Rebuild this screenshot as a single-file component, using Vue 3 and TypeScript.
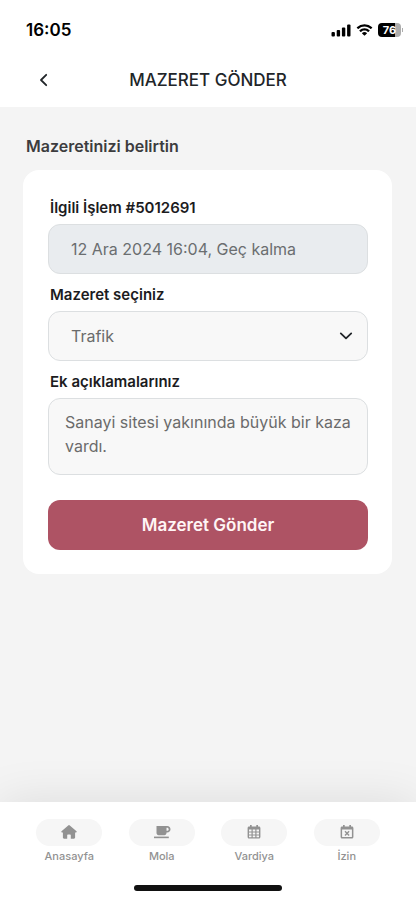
<script setup lang="ts">
import { ref } from 'vue'

type IconName = 'home' | 'cup' | 'calendar' | 'leave'

interface Tab {
  label: string
  icon: IconName
}

const tabs: Tab[] = [
  { label: 'Anasayfa', icon: 'home' },
  { label: 'Mola', icon: 'cup' },
  { label: 'Vardiya', icon: 'calendar' },
  { label: 'İzin', icon: 'leave' },
]

const operation = '12 Ara 2024 16:04, Geç kalma'
const reasons: string[] = ['Trafik']
const reason = ref<string>('Trafik')
const note = ref<string>('Sanayi sitesi yakınında büyük bir kaza vardı.')
</script>

<template>
  <div class="screen">
    <header class="top">
      <div class="status">
        <span class="clock">16:05</span>
        <div class="indicators">
          <svg class="signal" viewBox="0 0 20 13" aria-hidden="true">
            <rect x="0.500" y="8" width="3.400" height="4.400" rx="1" />
            <rect x="5.700" y="6" width="3.400" height="6.400" rx="1" />
            <rect x="10.900" y="3.400" width="3.400" height="9" rx="1" />
            <rect x="16.100" y="0.400" width="3.400" height="12" rx="1" />
          </svg>
          <svg class="wifi" viewBox="0 0 17 13" aria-hidden="true">
            <path d="M8.5 2.6c2.4 0 4.5.9 6.1 2.4.1.1.3.1.4 0l1.2-1.2c.1-.1.1-.3 0-.5A11.2 11.2 0 0 0 .8 3.3c-.1.2-.1.4 0 .5L2 5c.1.1.3.1.4 0A8.9 8.9 0 0 1 8.5 2.6Z" />
            <path d="M8.5 6.6c1.3 0 2.5.5 3.4 1.3.1.1.3.1.5 0l1.2-1.2c.1-.1.1-.3 0-.5a7.4 7.4 0 0 0-10.2 0c-.1.2-.1.4 0 .5l1.2 1.2c.2.1.4.1.5 0 .9-.8 2.1-1.3 3.4-1.3Z" />
            <path d="M10.9 9.4c.1-.1.1-.3 0-.5a3.7 3.7 0 0 0-4.8 0c-.1.2-.1.4 0 .5l2.100 2.200c.2.1.4.1.6 0Z" />
          </svg>
          <div class="battery">
            <span class="battery-body">76</span>
            <span class="battery-tip"></span>
          </div>
        </div>
      </div>
      <div class="titlebar">
        <button class="back" type="button" aria-label="Geri">
          <svg viewBox="0 0 12 16" aria-hidden="true"><path d="M9.200 2.800 4 8l5.200 5.200" /></svg>
        </button>
        <h1>MAZERET GÖNDER</h1>
      </div>
    </header>

    <main>
      <h2>Mazeretinizi belirtin</h2>
      <form class="card" @submit.prevent>
        <div class="group">
          <label for="operation">İlgili İşlem #5012691</label>
          <input id="operation" class="field" type="text" :value="operation" disabled />
        </div>
        <div class="group">
          <label for="reason">Mazeret seçiniz</label>
          <div class="picker">
            <select id="reason" v-model="reason" class="field">
              <option v-for="item in reasons" :key="item">{{ item }}</option>
            </select>
            <svg class="chevron" viewBox="0 0 14 10" aria-hidden="true"><path d="m1.800 2.400 5.200 5 5.200-5" /></svg>
          </div>
        </div>
        <div class="group">
          <label for="note">Ek açıklamalarınız</label>
          <textarea id="note" v-model="note" class="field" rows="2"></textarea>
        </div>
        <button class="submit" type="submit">Mazeret Gönder</button>
      </form>
    </main>

    <nav>
      <div class="tabs">
        <a v-for="tab in tabs" :key="tab.label" class="tab" href="#">
          <span class="pill">
            <svg v-if="tab.icon === 'home'" viewBox="0 1 16 16" aria-hidden="true">
              <path d="M7.2 1.4a1.2 1.2 0 0 1 1.6 0L15.5 7.3c.5.5.2 1.2-.5 1.2h-.9v5.100c0 .7-.5 1.200-1.200 1.200H9.8v-3.600c0-.4-.3-.7-.7-.7H6.9c-.4 0-.7.3-.7.7v3.600H3.1c-.7 0-1.2-.5-1.2-1.200V8.5H1C.3 8.5 0 7.8.5 7.3Z" />
            </svg>
            <svg v-else-if="tab.icon === 'cup'" class="wide" viewBox="0 1 18 16" aria-hidden="true">
              <path fill-rule="evenodd" d="M3.5 2h10.700c2 0 3.300 1.400 3.300 3.200s-1.400 3.300-3.300 3.300h-.7v.6c0 1.200-.9 2.100-2.100 2.100H5.6c-1.200 0-2.100-.9-2.100-2.100Zm10 1.700v3.100h.6c.9 0 1.600-.7 1.600-1.600s-.7-1.500-1.600-1.500Z" />
              <path d="M1 12.6h14.800v1.600H1z" />
            </svg>
            <svg v-else-if="tab.icon === 'calendar'" viewBox="0 1 16 16" aria-hidden="true">
              <path fill-rule="evenodd" d="M4 1h1.700v1.600h4.600V1H12v1.600h.9c.9 0 1.500.6 1.500 1.500v9c0 .9-.6 1.500-1.500 1.500H3.100c-.9 0-1.500-.6-1.500-1.500v-9c0-.9.6-1.500 1.500-1.500H4ZM3 5.600v1.900h2.500V5.600Zm3.700 0v1.900h2.600V5.600Zm3.800 0v1.900H13V5.600ZM3 8.600v1.800h2.500V8.600Zm3.700 0v1.800h2.600V8.600Zm3.800 0v1.800H13V8.600ZM3 11.500v1.800h2.500v-1.800Zm3.700 0v1.800h2.600v-1.800Zm3.800 0v1.800H13v-1.800Z" />
            </svg>
            <svg v-else viewBox="0 1 16 16" aria-hidden="true">
              <path fill-rule="evenodd" d="M4 1h1.700v1.600h4.600V1H12v1.600h.9c.9 0 1.500.6 1.500 1.500v9c0 .9-.6 1.500-1.500 1.500H3.100c-.9 0-1.500-.6-1.500-1.500v-9c0-.9.6-1.500 1.500-1.500H4ZM3.100 5.600v7.500h9.800V5.600Z" />
              <path class="cross" d="m6 7.300 4.100 4.100m0-4.100L6 11.400" />
            </svg>
          </span>
          <span class="tab-label">{{ tab.label }}</span>
        </a>
      </div>
      <div class="home-indicator"></div>
    </nav>
  </div>
</template>

<style>
body {
  background: #f4f4f4;
}
</style>

<style scoped>
.screen,
.screen * {
  box-sizing: border-box;
}

.screen {
  display: flex;
  flex-direction: column;
  min-height: 100vh;
  background: #f4f4f4;
  color: #212529;
  font-family: Inter, 'Liberation Sans', sans-serif;
}

.top {
  background: #fff;
}

.status {
  display: flex;
  align-items: center;
  justify-content: space-between;
  height: 60px;
  padding: 0 13px 0 26px;
  color: #000;
}

.clock {
  font-size: 17px;
  font-weight: 600;
}

.indicators {
  display: flex;
  align-items: center;
  gap: 5px;
}

.signal {
  width: 20px;
  height: 13px;
}

.wifi {
  width: 17px;
  height: 13px;
}

.battery {
  display: flex;
  align-items: center;
  gap: 1px;
}

.battery-body {
  width: 23px;
  height: 14px;
  border-radius: 4px;
  background: linear-gradient(90deg, #000 76%, #adadad 76%);
  color: #fff;
  font-size: 11px;
  font-weight: 700;
  line-height: 14px;
  text-align: center;
}

.battery-tip {
  width: 1px;
  height: 4px;
  background: #adadad;
}

.titlebar {
  display: grid;
  grid-template-columns: 36px 1fr 36px;
  align-items: center;
  height: 47px;
  padding: 0 25px 7px;
}

.back {
  display: grid;
  place-items: center;
  height: 36px;
  padding: 0;
  border: 0;
  background: none;
}

.back svg {
  width: 12px;
  height: 16px;
}

.back path,
.chevron path {
  fill: none;
  stroke: #212529;
  stroke-width: 1.8;
  stroke-linecap: round;
  stroke-linejoin: round;
}

h1 {
  margin: 0;
  font-size: 17px;
  font-weight: 500;
  line-height: 24px;
  text-align: center;
}

main {
  flex: 1;
  padding: 27px 24px 24px 23px;
}

h2 {
  margin: 0 3px 12px;
  color: #3c3c3e;
  font-size: 16px;
  font-weight: 600;
  line-height: 24px;
}

.card {
  display: flex;
  flex-direction: column;
  gap: 10px;
  padding: 27px 24px 24px 25px;
  border-radius: 16px;
  background: #fff;
}

.group {
  display: flex;
  flex-direction: column;
  gap: 5px;
}

label {
  padding: 0 2px;
  color: #1c1c1e;
  font-size: 15px;
  font-weight: 600;
  line-height: 22px;
}

.field {
  display: block;
  width: 100%;
  height: 50px;
  margin: 0;
  padding: 0 22px;
  border: 1px solid #dcdfe1;
  border-radius: 12px;
  background: #f8f8f8;
  color: #6b6b6b;
  font-family: inherit;
  font-size: 16px;
  line-height: 24px;
  appearance: none;
}

.field:disabled {
  background: #e9ecef;
  color: #6b6e70;
}

.picker {
  display: grid;
  align-items: center;
}

.picker > * {
  grid-area: 1 / 1;
}

.chevron {
  justify-self: end;
  width: 14px;
  height: 10px;
  margin-right: 15px;
  pointer-events: none;
}

textarea.field {
  height: 77px;
  padding: 11px 8px 11px 16px;
  overflow: hidden;
  resize: none;
}

.submit {
  height: 50px;
  margin-top: 15px;
  border: 0;
  border-radius: 12px;
  background: #ae5364;
  color: #fff5f5;
  font-family: inherit;
  font-size: 17px;
  font-weight: 600;
}

nav {
  padding: 17px 23px 9px;
  background: #fff;
  box-shadow: 0 0 48px rgba(0, 0, 0, 0.1);
}

.tabs {
  display: grid;
  grid-template-columns: repeat(4, 1fr);
}

.tab {
  display: flex;
  flex-direction: column;
  align-items: center;
  gap: 2px;
  color: #929292;
  text-decoration: none;
}

.pill {
  display: grid;
  place-items: center;
  width: 66px;
  height: 27px;
  border-radius: 14px;
  background: #f6f6f6;
}

.pill svg {
  width: 16px;
  height: 16px;
  fill: #929292;
  overflow: visible;
}

.pill .wide {
  width: 18px;
}

.pill .cross {
  stroke: #929292;
  stroke-width: 1.4;
}

.tab-label {
  font-size: 11px;
  font-weight: 500;
  line-height: 16px;
}

.home-indicator {
  width: 40%;
  max-width: 148px;
  height: 6px;
  margin: 21px auto 0;
  border-radius: 3px;
  background: #111;
}
</style>
